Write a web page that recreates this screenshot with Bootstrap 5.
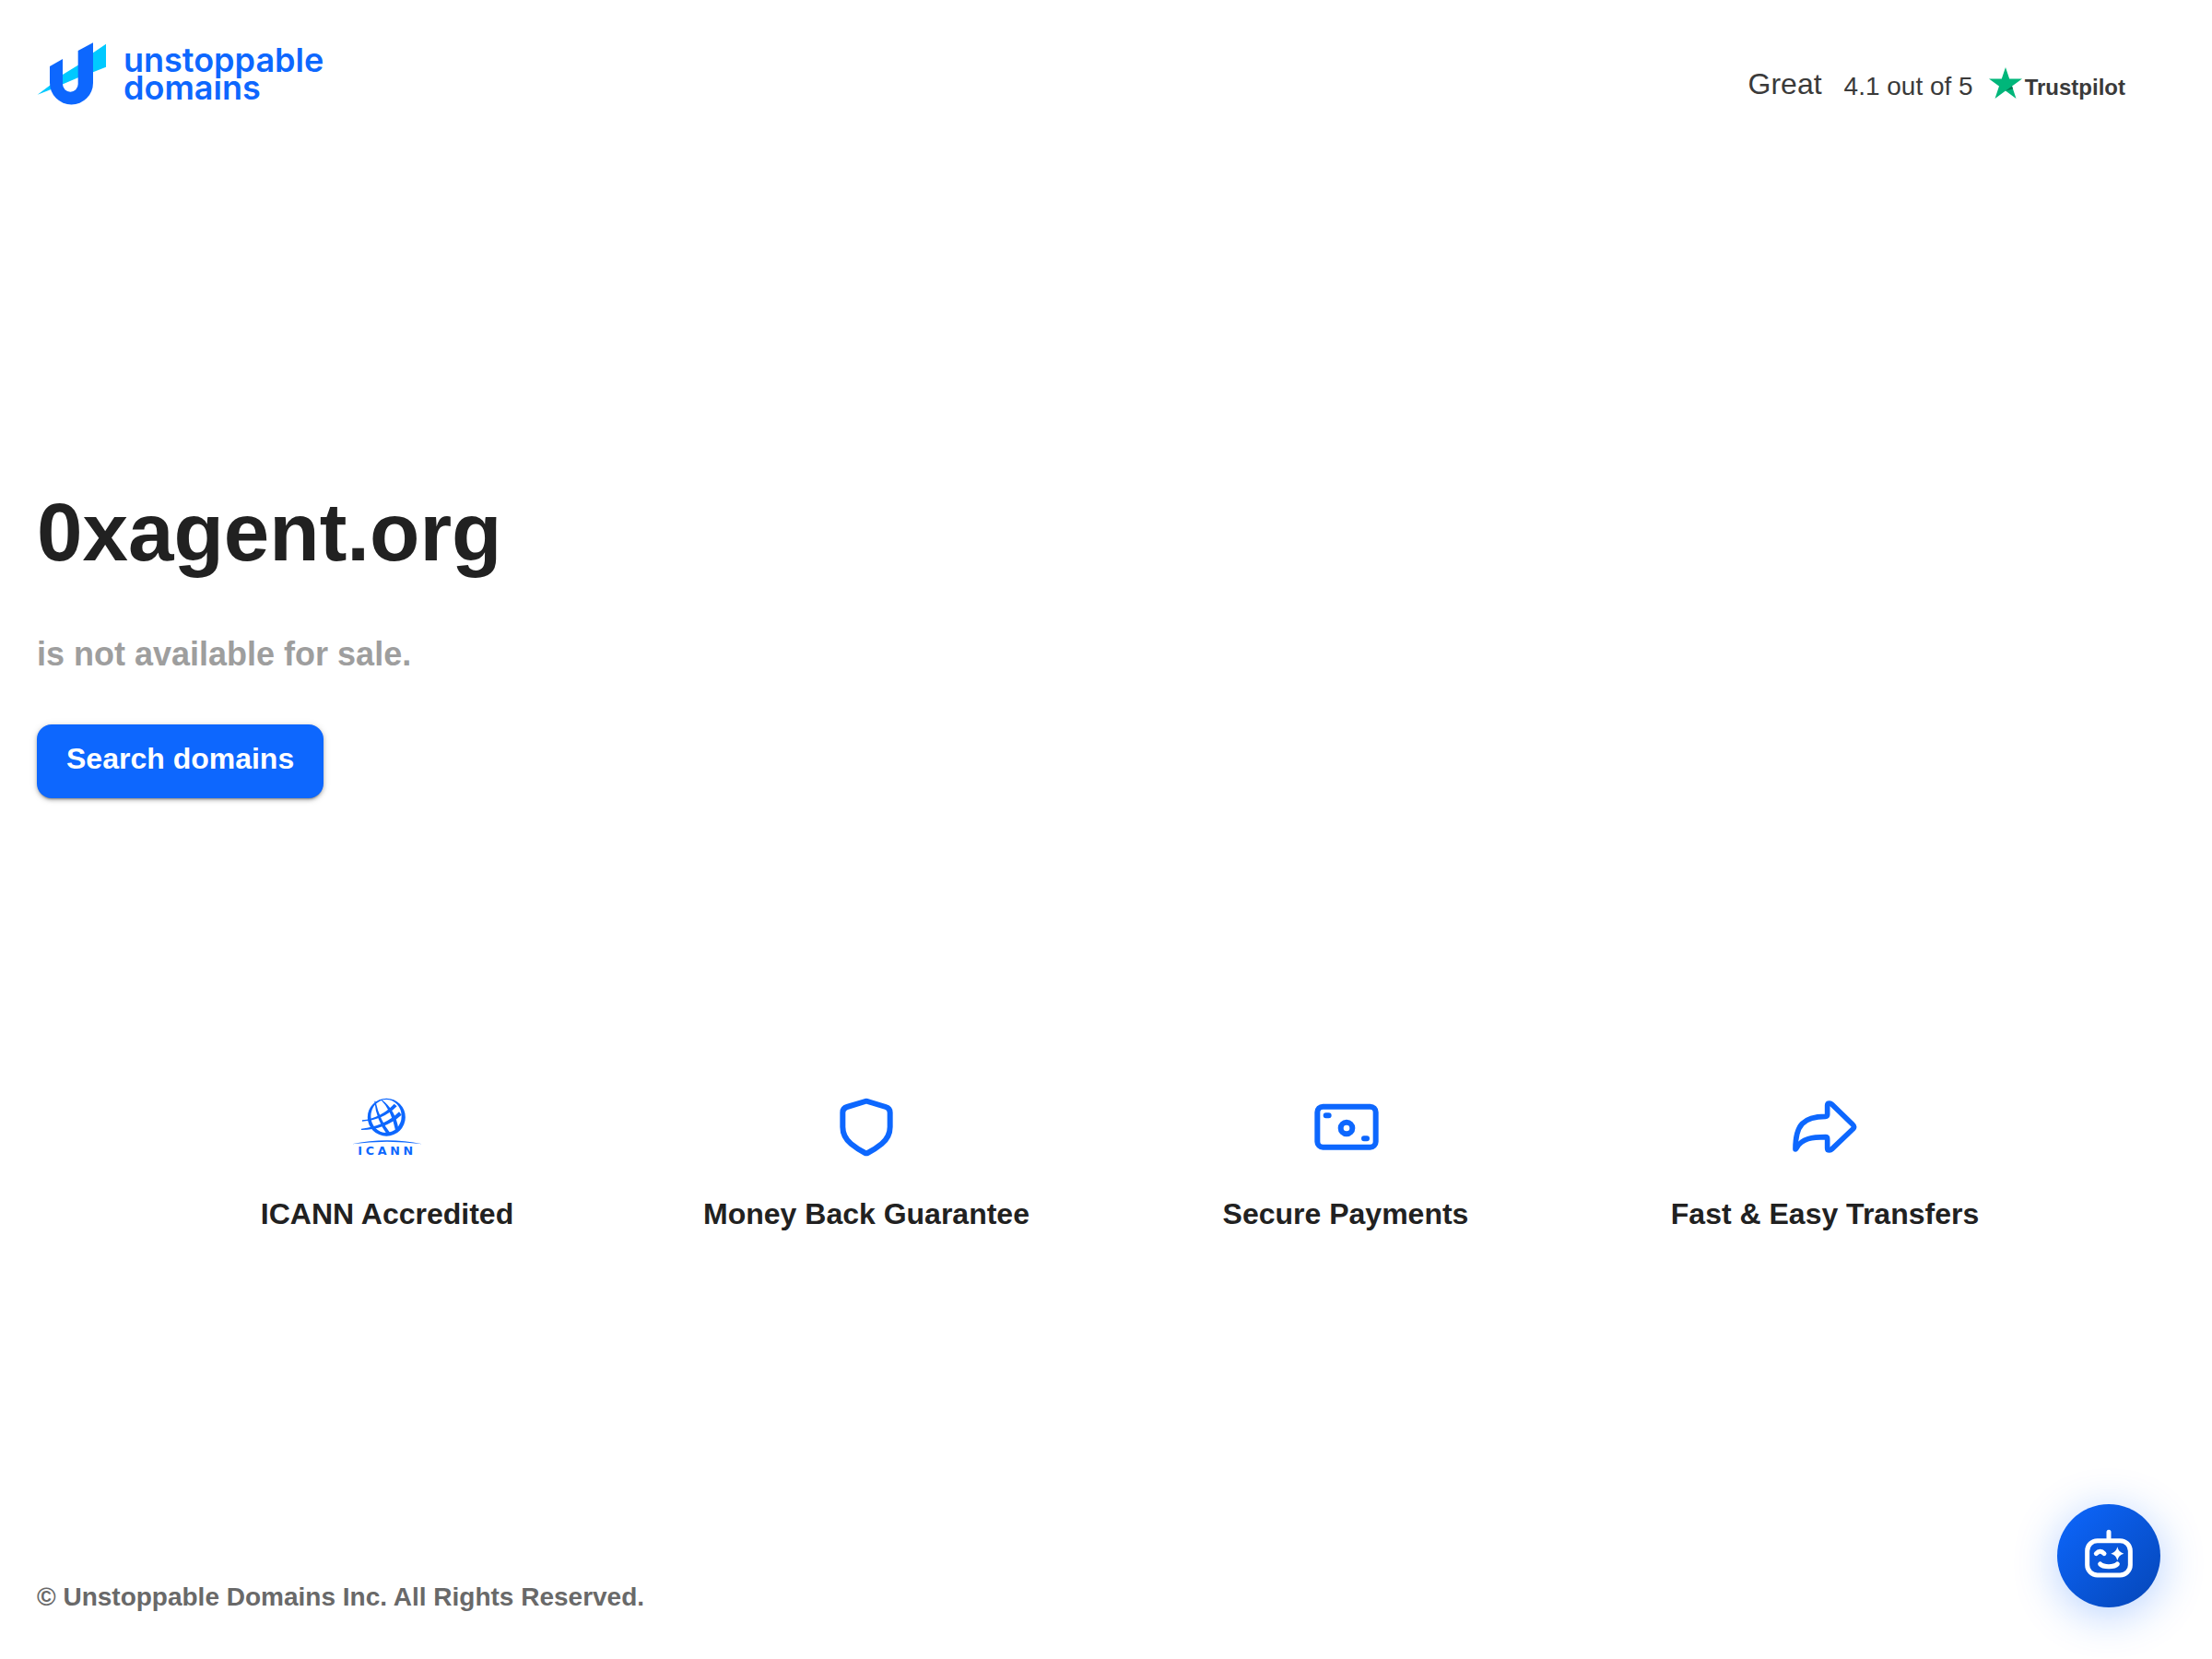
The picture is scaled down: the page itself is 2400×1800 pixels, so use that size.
<!DOCTYPE html>
<html lang="en">
<head>
<meta charset="utf-8">
<meta name="viewport" content="width=device-width, initial-scale=1">
<title>0xagent.org</title>
<link href="https://cdn.jsdelivr.net/npm/bootstrap@5.3.0/dist/css/bootstrap.min.css" rel="stylesheet">
<style>
  :root { --brand: #0d67fe; --ink: #212121; }
  body { font-family: "Liberation Sans", Arial, sans-serif; color: var(--ink); background: #fff; }
  .page-pad { padding-left: 40px; padding-right: 40px; }
  .site-head { padding-top: 40px; padding-right: 94px; }
  .brand-link { gap: 18px; color: var(--brand); }
  .brand-name { font-family: Inter, sans-serif; font-weight: 600; font-size: 36px; line-height: 30px; }
  .rating { color: #3a3a3a; font-size: 28px; line-height: 40px; padding-top: 31px; }
  .rating-word { font-size: 32px; margin-right: 24px; }
  .rating-score { margin-top: 3px; margin-right: 17px; }
  .rating-brand { gap: 3px; font-size: 24px; line-height: 28px; font-weight: 700; }
  .rating-brand span { padding-top: 10px; }
  .hero { padding-top: 397px; }
  .hero-title { font-size: 89px; line-height: 120px; font-weight: 700; }
  .hero-sub { font-size: 36px; line-height: 56px; font-weight: 700; color: #9e9e9e; margin-top: 45px; }
  .btn-search { --bs-btn-color: #fff; --bs-btn-bg: var(--brand); --bs-btn-hover-color: #fff; --bs-btn-hover-bg: #0546b7;
    --bs-btn-border-width: 0; --bs-btn-border-radius: 16px; --bs-btn-padding-x: 32px; --bs-btn-padding-y: 15px;
    --bs-btn-font-size: 32px; --bs-btn-line-height: 44px; --bs-btn-font-weight: 700;
    margin-top: 48px; padding-bottom: 21px;
    box-shadow: 0 3px 2px -2px rgba(0,0,0,.3), 0 2px 4px rgba(0,0,0,.24), 0 1px 8px rgba(0,0,0,.12); }
  .perks { padding: 317px 160px 0; }
  .perk-icon { width: 80px; height: 80px; color: var(--brand); }
  .perk-label { font-size: 32px; line-height: 48px; font-weight: 700; margin-top: 30px; }
  .site-foot { color: #696969; font-size: 28px; line-height: 40px; font-weight: 700; padding-bottom: 47px; }
  .chat-btn { position: fixed; right: 56px; bottom: 56px; width: 112px; height: 112px;
    background: linear-gradient(135deg, #0d67fe, #0546b7); box-shadow: 0 8px 48px rgba(13,103,254,.3); }
</style>
</head>
<body>
<div class="d-flex flex-column min-vh-100">
  <header class="site-head page-pad d-flex justify-content-between align-items-start">
    <a href="#" class="brand-link d-flex align-items-center text-decoration-none">
      <svg width="76" height="80" viewBox="30 30 228 240" aria-hidden="true">
        <path fill="#00c9ff" d="M32 218 72 188 115 152 164 122 213 82 255 53V128L213 145 164 163 115 184 76 201Z"/>
        <path fill="#0d67fe" d="M72 126 114 102V184a25 25 0 0 0 50 0V75L213 49V180a70.500 70.500 0 0 1-141 0Z"/>
      </svg>
      <span class="brand-name">unstoppable<br>domaıns</span>
    </a>
    <div class="rating d-flex align-items-start">
      <span class="rating-word">Great</span>
      <span class="rating-score">4.1 out of 5</span>
      <div class="rating-brand d-flex align-items-center">
        <svg width="36" height="34" viewBox="0 0 36 34" aria-hidden="true">
          <path fill="#00b67a" d="M18 0 22.200 12.500H36L25 20.500 29.500 34 18 25.500 6.500 34 11 20.500 0 12.500H13.800Z"/>
          <path fill="#007a52" d="M26.200 23.600 25 20.500 18 25.500Z"/>
        </svg>
        <span>Trustpilot</span>
      </div>
    </div>
  </header>

  <main>
    <section class="hero page-pad">
      <h1 class="hero-title m-0">0xagent.org</h1>
      <p class="hero-sub mb-0">is not available for sale.</p>
      <button type="button" class="btn btn-search">Search domains</button>
    </section>

    <section class="perks">
      <div class="row g-0 text-center">
        <div class="col-3">
          <svg class="perk-icon" viewBox="360 37 240 240" aria-hidden="true">
            <g fill="currentColor">
              <path fill-rule="evenodd" d="M478 63a61.500 61.500 0 1 1-.1 123a61.500 61.500 0 1 1 .1-123ZM477 67a50 54 0 1 0 .1 108a50 54 0 1 0-.1-108Z"/>
              <path d="M399 134Q460 127 503 81L512 89Q466 135 399 138ZM396 162Q472 154 519 107L527 117Q473 165 396 166Z"/>
              <path d="M439 72Q444 132 480 181L491 177Q456 134 442 72ZM459 67Q494 101 507 167L517 163Q508 101 462 67Z"/>
              <path d="M366 212Q480 188 594 212Q480 197 366 212Z"/>
              <text x="480" y="247" text-anchor="middle" font-family="DejaVu Sans, sans-serif" font-weight="700" font-size="38" letter-spacing="11">ICANN</text>
            </g>
          </svg>
          <div class="perk-label">ICANN Accredited</div>
        </div>
        <div class="col-3">
          <svg class="perk-icon" viewBox="480 37 240 240" fill="none" stroke="currentColor" stroke-width="18" aria-hidden="true">
            <path d="M596 73Q600 71 604 73L663 91Q677 95 677 109V156Q677 188 650 211Q628 229 604 241Q600 243 596 241Q572 229 550 211Q523 188 523 156V109Q523 95 537 91Z"/>
          </svg>
          <div class="perk-label">Money Back Guarantee</div>
        </div>
        <div class="col-3">
          <svg class="perk-icon" viewBox="360 37 240 240" fill="none" stroke="currentColor" stroke-width="18" stroke-linecap="round" aria-hidden="true">
            <rect x="388" y="90" width="190" height="132" rx="18"/>
            <circle cx="483" cy="160" r="19"/>
            <path d="M416 118.500H425M540 193.500H549"/>
          </svg>
          <div class="perk-label">Secure Payments</div>
        </div>
        <div class="col-3">
          <svg class="perk-icon" viewBox="480 37 240 240" fill="none" stroke="currentColor" stroke-width="17" stroke-linejoin="round" aria-hidden="true">
            <path d="M608 86Q608 79 615 79Q619 79 623 83L691 149Q699 156 691 163L623 228Q619 232 615 232Q608 232 608 225V195Q608 189 602 189C560 189 525 193 508 224Q504 230 504 228C504 150 530 122 602 122Q608 122 608 116Z"/>
          </svg>
          <div class="perk-label">Fast &amp; Easy Transfers</div>
        </div>
      </div>
    </section>
  </main>

  <footer class="site-foot page-pad mt-auto">© Unstoppable Domains Inc. All Rights Reserved.</footer>
</div>

<button type="button" class="chat-btn btn border-0 rounded-circle p-0" aria-label="Chat">
  <svg class="d-block" width="112" height="112" viewBox="96 96 336 336" fill="none" stroke="#fff" stroke-width="15" stroke-linecap="round" aria-hidden="true">
    <rect x="194" y="215" width="140" height="112" rx="33"/>
    <path d="M264 187V208M223 257Q236 243 249 257M236 291Q243 299 264 299Q285 299 292 291"/>
    <path fill="#fff" stroke="none" d="M292 235Q296 253 313 257Q296 261 292 279Q288 261 271 257Q288 253 292 235Z"/>
  </svg>
</button>
<script src="https://cdn.jsdelivr.net/npm/bootstrap@5.3.0/dist/js/bootstrap.bundle.min.js"></script>
</body>
</html>
